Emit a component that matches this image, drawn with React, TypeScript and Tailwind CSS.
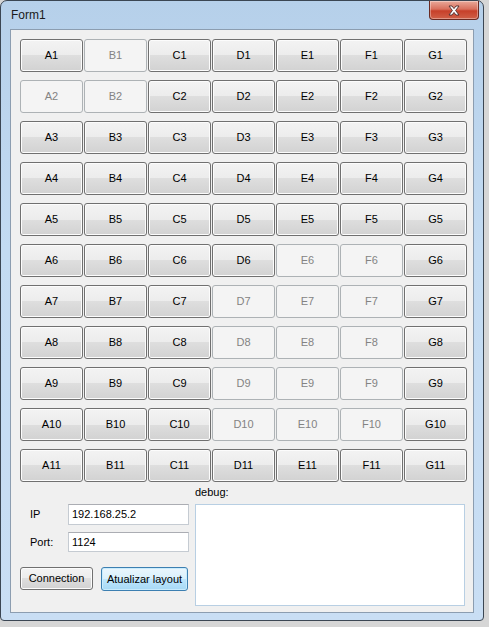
import React from 'react';

const cols = ['A', 'B', 'C', 'D', 'E', 'F', 'G'];
const disabled = new Set([
  'B1', 'A2', 'B2', 'E6', 'F6', 'D7', 'E7', 'F7', 'D8', 'E8', 'F8',
  'D9', 'E9', 'F9', 'D10', 'E10', 'F10',
]);

const btnOn =
  'border border-[#707070] rounded-[3px] bg-[linear-gradient(to_bottom,#f3f3f3_0%,#ececec_50%,#dedede_50%,#d2d2d2_100%)] shadow-[inset_0_0_0_1px_#fcfcfc] text-black';
const btnOff = 'border border-[#adb2b5] rounded-[3px] bg-[#f4f4f4] text-[#838383]';

const App: React.FC = () => {
  const rows = Array.from({ length: 11 }, (_, i) => i + 1);

  return (
    <div className="w-[489px] h-[627px] bg-[#d6d6d6] overflow-hidden font-['Liberation_Sans',Arial,sans-serif]">
      <div className="w-[484px] h-[621px] flex flex-col rounded-t-[7px] rounded-b-[4px] border border-[#3b4653] bg-[linear-gradient(to_bottom,#b6d0ea_0%,#c3dbf2_40%,#c9def4_100%)] px-[9px] pb-[7px]">
        {/* title bar */}
        <div className="h-[28px] flex items-start justify-between">
          <span className="pt-[7px] pl-[1px] text-[12px] leading-[15px] text-[#1a1a1a]">Form1</span>
          <div className="w-[50px] h-[19px] mr-[-5px] rounded-b-[4px] border border-t-0 border-[#6a2a22] bg-[linear-gradient(to_bottom,#e9a99a_0%,#d8705d_45%,#c7402a_55%,#d06048_100%)] shadow-[inset_0_0_0_1px_rgba(255,255,255,0.35)] flex items-center justify-center">
            <svg width="14" height="11" viewBox="0 0 14 11">
              <path
                d="M2 1h3l2 2.6L9 1h3L8.6 5.5 12 10H9L7 7.4 5 10H2l3.4-4.5z"
                fill="#ffffff"
                stroke="#4a2a2a"
                strokeWidth="0.9"
                strokeLinejoin="round"
              />
            </svg>
          </div>
        </div>

        {/* client area */}
        <div className="flex-1 border border-[#8c9db0] bg-[#f0f0f0] pt-[9px] pl-[9px] text-[11px]">
          <div className="grid grid-cols-[repeat(7,63px)] auto-rows-[33px] gap-x-px gap-y-[8px]">
            {rows.map((r) =>
              cols.map((c) => {
                const name = `${c}${r}`;
                return (
                  <div
                    key={name}
                    className={`flex items-center justify-center ${disabled.has(name) ? btnOff : btnOn}`}
                  >
                    {name}
                  </div>
                );
              })
            )}
          </div>

          <div className="flex gap-[6px]">
            <div className="w-[169px] pt-[22px] flex flex-col">
              <div className="flex items-center h-[21px]">
                <span className="w-[48px] pl-[10px] text-black">IP</span>
                <div className="w-[121px] h-[21px] border border-[#c5cbd2] border-t-[#abadb3] bg-white pl-[3px] flex items-center text-black">
                  192.168.25.2
                </div>
              </div>
              <div className="flex items-center h-[20px] mt-[7px]">
                <span className="w-[48px] pl-[10px] text-black">Port:</span>
                <div className="w-[121px] h-[20px] border border-[#c5cbd2] border-t-[#abadb3] bg-white pl-[3px] flex items-center text-black">
                  1124
                </div>
              </div>
              <div className="flex items-start mt-[15px] gap-[8px]">
                <div className={`w-[73px] h-[23px] flex items-center justify-center ${btnOn}`}>Connection</div>
                <div className="w-[87px] h-[24px] flex items-center justify-center rounded-[3px] border border-[#3c7fb1] bg-[linear-gradient(to_bottom,#eaf6fd_0%,#d9f0fc_50%,#bee6fd_50%,#a7d9f5_100%)] shadow-[inset_0_0_0_1px_#c9ecfd] text-black">
                  Atualizar layout
                </div>
              </div>
            </div>

            <div className="flex flex-col">
              <div className="h-[22px] pt-[4px] leading-[13px] text-black">debug:</div>
              <div className="w-[270px] h-[102px] border border-[#b8cfe3] bg-white" />
            </div>
          </div>
        </div>
      </div>
    </div>
  );
};

export default App;
